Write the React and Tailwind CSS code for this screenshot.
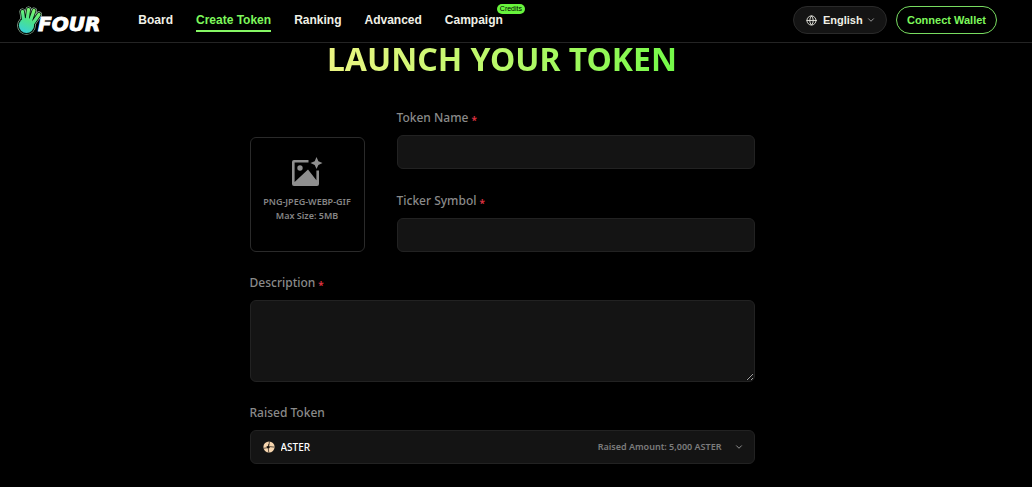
import React from "react";
import { ChevronDown, Globe } from "lucide-react";

const links = [
  { label: "Board" },
  { label: "Create Token", active: true },
  { label: "Ranking" },
  { label: "Advanced" },
  { label: "Campaign", badge: "Credits" },
];

const fingers = "M8 18 6.500 6.500M11 16 12.500 4.500M14 17 18 5.500M16 19.500 23 9.500";

function Logo() {
  return (
    <a href="#" aria-label="Four" className="flex items-center">
      <svg viewBox="0 0 26 30" className="h-[30px] w-[26px]" aria-hidden="true">
        <defs>
          <linearGradient id="hand" gradientUnits="userSpaceOnUse" x1="18" y1="3" x2="7" y2="29">
            <stop offset="0" stopColor="#86fa6a" />
            <stop offset="0.5" stopColor="#4be28c" />
            <stop offset="1" stopColor="#35cfe0" />
          </linearGradient>
        </defs>
        <g strokeLinecap="round" strokeLinejoin="round" fill="none">
          <g stroke="#a9cdb2" strokeWidth="6">
            <path d={fingers} />
            <circle cx="10.500" cy="20.500" r="6.300" />
          </g>
          <g stroke="#04140c" strokeWidth="4.800">
            <path d={fingers} />
            <circle cx="10.500" cy="20.500" r="6.300" />
          </g>
          <path d={fingers} stroke="url(#hand)" strokeWidth="3.200" />
          <circle cx="10.500" cy="20.500" r="7.600" fill="url(#hand)" />
        </g>
      </svg>
      <span className="-ml-1 pt-2 font-['DejaVu_Sans',sans-serif] text-[20px] leading-5 font-bold text-white italic [-webkit-text-stroke:1px_white]">
        FOUR
      </span>
    </a>
  );
}

function Label({ htmlFor, required, children }) {
  return (
    <label
      htmlFor={htmlFor}
      className="flex items-center gap-[3px] text-[12px] leading-[18px] font-medium text-[#8a8a8a]"
    >
      {children}
      {required && <span className="pt-1 text-[10px] leading-none font-bold text-[#d8303f]">*</span>}
    </label>
  );
}

function Field({ id, label }) {
  return (
    <div className="flex flex-col gap-2">
      <Label htmlFor={id} required>{label}</Label>
      <input
        id={id}
        type="text"
        className="h-[34px] w-full rounded-md border border-[#222222] bg-[#141414] px-3 text-[12px] text-white outline-none"
      />
    </div>
  );
}

export default function App() {
  return (
    <div className="min-h-screen bg-black font-['Noto_Sans',sans-serif] text-white">
      <header className="flex h-[43px] items-center border-b border-[#242424] pr-[35px] pb-0.5 pl-4 font-['Liberation_Sans',sans-serif]">
        <Logo />
        <nav className="ml-[38px] flex gap-[23px] pt-0.5 text-[12px] leading-5 font-bold text-[#f0f0e6]">
          {links.map((l) => (
            <a
              key={l.label}
              href="#"
              className={
                l.active
                  ? "relative border-b-2 border-[#86f765] text-[#7ef85c]"
                  : "relative border-b-2 border-transparent"
              }
            >
              {l.label}
              {l.badge && (
                <span className="absolute -top-1.5 left-[52px] rounded-full bg-[#68f43c] px-[3px] text-[7px] leading-[10px] font-normal text-black">
                  {l.badge}
                </span>
              )}
            </a>
          ))}
        </nav>
        <div className="ml-auto flex items-center gap-[9px] text-[11px] font-bold">
          <div className="flex h-7 items-center rounded-full border border-[#2a2a2a] bg-[#141414] pr-2.5 pl-3">
            <Globe className="mr-1.5 size-[11px] text-[#e4e4dc]" aria-hidden="true" />
            <select
              aria-label="Language"
              className="w-[43px] appearance-none bg-transparent leading-4 text-[#f0f0e6] outline-none"
            >
              <option>English</option>
            </select>
            <ChevronDown className="size-2.5 text-[#b0b0b0]" aria-hidden="true" />
          </div>
          <button type="button" className="h-7 rounded-full border border-[#78dc60] px-2.5 text-[#7ef85c]">
            Connect Wallet
          </button>
        </div>
      </header>

      <main className="pr-7 pb-6">
        <h1 className="text-center text-[32px] leading-8 font-bold">
          <span className="bg-linear-to-r from-[#ecf583] to-[#72fa48] bg-clip-text text-transparent">
            LAUNCH YOUR TOKEN
          </span>
        </h1>
        <form className="mx-auto mt-[34px] flex max-w-[505px] flex-col gap-[22px]">
          <div className="flex items-end gap-8">
            <label className="flex size-[115px] shrink-0 flex-col items-center rounded-md border border-[#2a2a2a] pt-[19px] text-center text-[9px] leading-[14px] font-semibold text-[#858585]">
              <input type="file" accept=".png,.jpeg,.webp,.gif" className="sr-only" />
              <svg viewBox="0 0 32 30" className="mb-2 h-[30px] w-8" fill="#8f8f8f" aria-hidden="true">
                <path d="M17.500 3H3a2 2 0 0 0-2 2v22a2 2 0 0 0 2 2h23a2 2 0 0 0 2-2V13.500h-2.600v9.700L17 12.500 3.600 25V5.600h13.900z" />
                <circle cx="9" cy="11" r="2.700" />
                <path d="M25.500 0 27.400 4.200 31.500 6 27.400 7.900 25.500 12 23.700 7.900 19.500 6 23.700 4.200z" />
              </svg>
              <span>PNG-JPEG-WEBP-GIF</span>
              <span>Max Size: 5MB</span>
            </label>
            <div className="flex min-w-0 flex-1 flex-col gap-[23px]">
              <Field id="name" label="Token Name" />
              <Field id="ticker" label="Ticker Symbol" />
            </div>
          </div>

          <div className="flex flex-col gap-2">
            <Label htmlFor="description" required>Description</Label>
            <textarea
              id="description"
              className="h-[82px] w-full resize-y rounded-md border border-[#222222] bg-[#141414] px-3 py-2 text-[12px] text-white outline-none scheme-dark"
            />
          </div>

          <div className="flex flex-col gap-2">
            <Label htmlFor="raised">Raised Token</Label>
            <div className="flex h-[34px] items-center rounded-md border border-[#222222] bg-[#141414] pr-2.5 pl-3">
              <svg viewBox="0 0 12 12" className="size-3" aria-hidden="true">
                <circle cx="6" cy="6" r="5.600" fill="#f6d5ae" />
                <path
                  d="M6.400 0.400Q6.300 4.800 5 6.200 4 7 0.500 7.300M3.300 5.900q3.300-.6 7.900.2M5.500 3.200q-.4 4.200.2 8"
                  fill="none"
                  stroke="#18120d"
                  strokeWidth="0.7"
                />
                <circle cx="5.300" cy="6.200" r="1.300" fill="#18120d" />
              </svg>
              <select
                id="raised"
                className="ml-1.5 min-w-0 flex-1 appearance-none bg-transparent text-[10px] font-medium text-white outline-none"
              >
                <option>ASTER</option>
              </select>
              <span className="text-[9px] font-semibold text-[#7c7c7c]">Raised Amount: 5,000 ASTER</span>
              <ChevronDown className="ml-3 size-2.5 text-[#a8a8a8]" aria-hidden="true" />
            </div>
          </div>
        </form>
      </main>
    </div>
  );
}
